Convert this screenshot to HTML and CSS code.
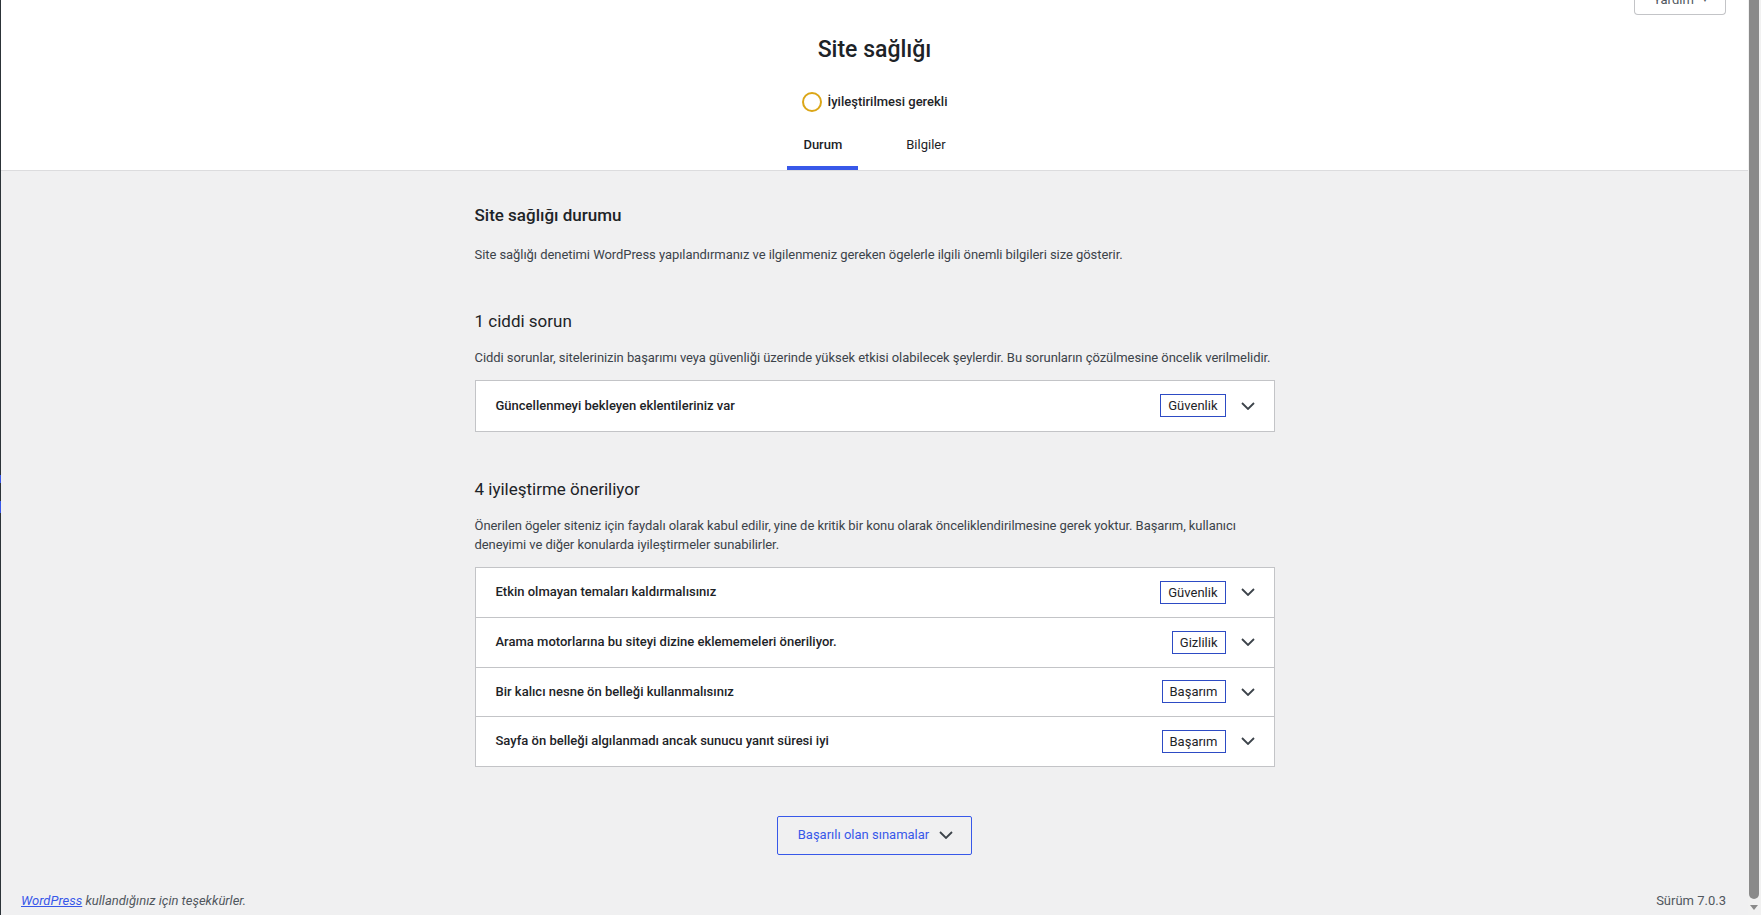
FILE: index.html
```html
<!DOCTYPE html>
<html lang="tr">
<head>
    <meta charset="UTF-8">
    <title>Site sağlığı</title>
    <link rel="stylesheet" href="styles.css">
</head>
<body>
<div class="frame">
    <div class="edge">
        <span class="edgeMark m1"></span>
        <span class="edgeMark m2"></span>
    </div>
    <div class="wrap">
        <a class="helpTab" href="#">Yardım <span class="caret">▼</span></a>
        <div class="hcHeader">
            <h1 class="hcTitle">Site sağlığı</h1>
            <div class="progress">
                <span class="ring"></span>
                <span class="progressLabel">İyileştirilmesi gerekli</span>
            </div>
            <nav class="tabs">
                <a class="tab on" href="#">Durum</a>
                <a class="tab" href="#">Bilgiler</a>
            </nav>
        </div>

        <div class="hcBody">
            <h2 class="statusTitle">Site sağlığı durumu</h2>
            <p class="intro">Site sağlığı denetimi WordPress yapılandırmanız ve ilgilenmeniz gereken ögelerle ilgili önemli bilgileri size gösterir.</p>

            <h3 class="countTitle">1 ciddi sorun</h3>
            <p class="countDesc">Ciddi sorunlar, sitelerinizin başarımı veya güvenliği üzerinde yüksek etkisi olabilecek şeylerdir. Bu sorunların çözülmesine öncelik verilmelidir.</p>
            <ul class="accordion">
                <li class="item">
                    <span class="itemTitle">Güncellenmeyi bekleyen eklentileriniz var</span>
                    <span class="badge">Güvenlik</span>
                    <svg class="chev" width="14" height="8" viewBox="0 0 14 8"><polyline points="1,1 7,7 13,1"/></svg>
                </li>
            </ul>

            <h3 class="countTitle second">4 iyileştirme öneriliyor</h3>
            <p class="countDesc">Önerilen ögeler siteniz için faydalı olarak kabul edilir, yine de kritik bir konu olarak önceliklendirilmesine gerek yoktur. Başarım, kullanıcı deneyimi ve diğer konularda iyileştirmeler sunabilirler.</p>
            <ul class="accordion">
                <li class="item">
                    <span class="itemTitle">Etkin olmayan temaları kaldırmalısınız</span>
                    <span class="badge">Güvenlik</span>
                    <svg class="chev" width="14" height="8" viewBox="0 0 14 8"><polyline points="1,1 7,7 13,1"/></svg>
                </li>
                <li class="item">
                    <span class="itemTitle">Arama motorlarına bu siteyi dizine eklememeleri öneriliyor.</span>
                    <span class="badge">Gizlilik</span>
                    <svg class="chev" width="14" height="8" viewBox="0 0 14 8"><polyline points="1,1 7,7 13,1"/></svg>
                </li>
                <li class="item">
                    <span class="itemTitle">Bir kalıcı nesne ön belleği kullanmalısınız</span>
                    <span class="badge">Başarım</span>
                    <svg class="chev" width="14" height="8" viewBox="0 0 14 8"><polyline points="1,1 7,7 13,1"/></svg>
                </li>
                <li class="item">
                    <span class="itemTitle">Sayfa ön belleği algılanmadı ancak sunucu yanıt süresi iyi</span>
                    <span class="badge">Başarım</span>
                    <svg class="chev" width="14" height="8" viewBox="0 0 14 8"><polyline points="1,1 7,7 13,1"/></svg>
                </li>
            </ul>

            <div class="passedRow">
                <a class="passedBtn" href="#">Başarılı olan sınamalar
                    <svg class="chev" width="14" height="8" viewBox="0 0 14 8"><polyline points="1,1 7,7 13,1"/></svg>
                </a>
            </div>
        </div>

        <div class="wpFooter">
            <p class="thanks"><a href="#">WordPress</a> kullandığınız için teşekkürler.</p>
            <p class="version">Sürüm 7.0.3</p>
        </div>
    </div>
    <div class="scrollbar">
        <span class="thumb"></span>
        <span class="arrowDown"></span>
    </div>
</div>
</body>
</html>
```

FILE: styles.css
```css
html,body{
    height: 100%;
    overflow: hidden;
}
*{
    margin:0;
    padding:0;
    list-style: none;
    box-sizing: border-box;
}
body{
    font-family: Roboto, "Noto Sans", sans-serif;
    font-size: 13px;
    line-height: 1.4;
    color: #3c434a;
    background: #f0f0f1;
}
a{
    color: #3858e9;
}
.frame{
    display: flex;
    height: 915px;
}
.edge{
    width: 1px;
    background: #2c3338;
    display: flex;
    flex-direction: column;
}
.edgeMark{
    width: 1px;
    background: #3858e9;
}
.edgeMark.m1{
    margin-top: 475px;
    height: 8px;
}
.edgeMark.m2{
    margin-top: 18px;
    height: 12px;
}
.wrap{
    flex: 1;
    position: relative;
    display: flex;
    flex-direction: column;
}
.helpTab{
    position: absolute;
    top: -13px;
    right: 22px;
    padding: 5px 16px 6px 18px;
    line-height: 16px;
    background: #fff;
    border: 1px solid #c3c4c7;
    border-top: none;
    border-radius: 0 0 4px 4px;
    color: #50575e;
    text-decoration: none;
}
.helpTab .caret{
    font-size: 8px;
    vertical-align: 2px;
    margin-left: 4px;
}
/* header */
.hcHeader{
    background: #fff;
    border-bottom: 1px solid #dcdcde;
    display: flex;
    flex-direction: column;
    align-items: center;
}
.hcTitle{
    margin-top: 35px;
    font-size: 23px;
    line-height: 30px;
    font-weight: 500;
    color: #1d2327;
}
.progress{
    margin-top: 27px;
    height: 20px;
    display: flex;
    align-items: center;
    gap: 6px;
}
.ring{
    width: 20px;
    height: 20px;
    border: 2px solid #dba617;
    border-radius: 50%;
}
.progressLabel{
    font-size: 13px;
    font-weight: 500;
    color: #1d2327;
}
.tabs{
    margin-top: 16px;
    display: flex;
}
.tab{
    display: block;
    margin: 0 16px;
    padding: 8px 16px 12px;
    line-height: 18px;
    color: #1d2327;
    text-decoration: none;
    border-bottom: 4px solid transparent;
}
.tab.on{
    font-weight: 500;
    border-bottom-color: #3858e9;
}
/* body */
.hcBody{
    width: 800px;
    margin: 0 auto;
}
.statusTitle{
    margin-top: 33px;
    font-size: 17px;
    line-height: 22px;
    font-weight: 500;
    color: #1d2327;
}
.intro,
.countDesc{
    line-height: 19px;
    letter-spacing: -0.06px;
}
.intro{
    margin-top: 19px;
}
.countTitle{
    margin-top: 46px;
    font-size: 17px;
    line-height: 22px;
    font-weight: 400;
    color: #1d2327;
}
.countTitle.second{
    margin-top: 46px;
}
.countDesc{
    margin-top: 16px;
}
.accordion{
    margin-top: 13px;
    background: #fff;
    border: 1px solid #c3c4c7;
}
.item{
    height: 49.5px;
    display: flex;
    align-items: center;
    padding: 0 19px 0 20px;
}
.item + .item{
    border-top: 1px solid #c3c4c7;
}
.itemTitle{
    flex: 1;
    font-weight: 500;
    color: #1d2327;
}
.badge{
    border: 1px solid #2d4bc4;
    padding: 0 7px;
    line-height: 21px;
    color: #1d2327;
}
.chev{
    margin-left: 15px;
    fill: none;
    stroke: #3c434a;
    stroke-width: 1.8;
}
.passedRow{
    margin-top: 49px;
    display: flex;
    justify-content: center;
}
.passedBtn{
    display: flex;
    align-items: center;
    height: 39px;
    padding: 0 18px 0 20px;
    border: 1px solid #3858e9;
    border-radius: 2px;
    color: #3858e9;
    text-decoration: none;
    font-size: 13px;
}
.passedBtn .chev{
    margin-left: 10px;
}
/* footer */
.wpFooter{
    margin-top: auto;
    display: flex;
    justify-content: space-between;
    padding: 0 22px 4px 20px;
    color: #50575e;
    line-height: 20px;
}
.thanks{
    font-style: italic;
}
/* scrollbar */
.scrollbar{
    width: 13px;
    background: #f1f1f1;
    display: flex;
    flex-direction: column;
    align-items: flex-start;
    padding-left: 1px;
}
.thumb{
    width: 10px;
    height: 899px;
    background: #8a8a8a;
    border-radius: 0 0 5px 5px;
}
.arrowDown{
    margin: 6px 0 0 1px;
    width: 0;
    height: 0;
    border-left: 4px solid transparent;
    border-right: 4px solid transparent;
    border-top: 5px solid #8a8a8a;
}
```
